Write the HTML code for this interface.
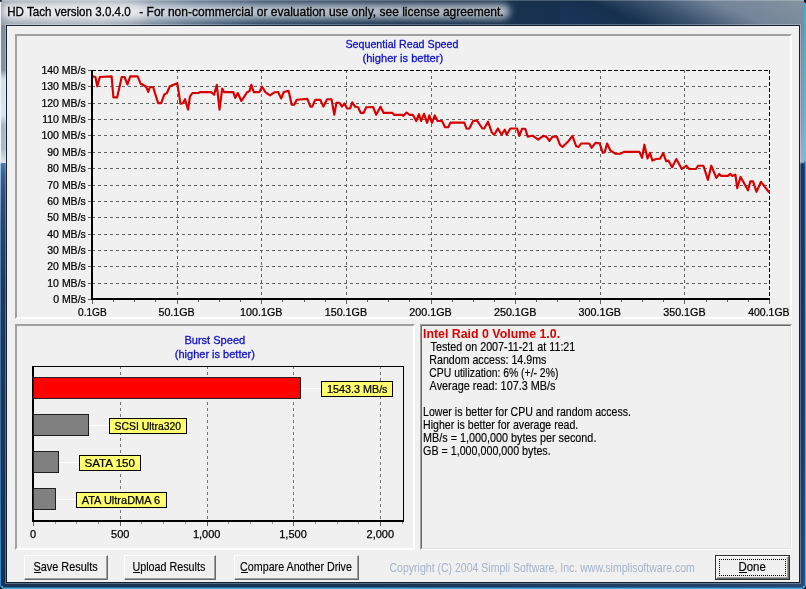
<!DOCTYPE html>
<html><head><meta charset="utf-8"><title>HD Tach</title>
<style>
html,body{margin:0;padding:0;}
body{width:806px;height:589px;overflow:hidden;position:relative;background:#1d3553;font-family:"Liberation Sans",sans-serif;}
.abs{position:absolute;}
#titlebg{left:0;top:0;width:806px;height:25px;background:linear-gradient(100deg,#98a3ae 0px,#a6b0ba 60px,#a9b3bd 105px,#8d9bab 140px,#5f7790 185px,#2f4a68 260px,#1a3350 400px,#16304e 560px,#16304e 806px);}
#titlebg2{left:560px;top:0;width:246px;height:25px;background:linear-gradient(24deg,#18345a 0,#16304e 34px,#3d5570 58px,#74859a 84px,#8593a0 123px);}
#glow{left:2px;top:4px;width:508px;height:15px;background:rgba(255,255,255,.66);border-radius:8px;filter:blur(3.5px);}
#glow2{left:4px;top:3px;width:140px;height:17px;background:rgba(255,255,255,.32);border-radius:8px;filter:blur(4px);}
#lframe{left:0;top:25px;width:7px;height:564px;background:linear-gradient(180deg,#7f8c9b 0px,#8593a0 45px,#d5dfe8 54px,#d8e4ee 90px,#a8b4c0 101px,#b0bac4 124px,#d0d8e0 133px,#dde4ea 137.5px,#4f779f 138.5px,#3c5f84 150px,#2c4c6e 175px,#1d3959 260px,#1a314d 560px);}
#rframe{left:799px;top:25px;width:7px;height:564px;background:linear-gradient(180deg,#7a8a9c 0px,#909cb0 100px,#a4acc6 137px,#1a3660 139px,#1b3862 400px,#264670 560px);}
#bframe{left:0;top:582px;width:806px;height:7px;background:linear-gradient(90deg,#1a3350 0,#1b3554 400px,#284870 806px);}
#client{left:7px;top:26px;width:792px;height:556px;background:#f0f0f0;}
.g{stroke:#626262;stroke-width:1;stroke-dasharray:3 3;}
.g2{stroke:#747474;stroke-width:1;stroke-dasharray:3 3;}
.gb{stroke:#000;stroke-width:1;stroke-dasharray:4 2;}
.t{stroke:#000;stroke-width:1;}
.t2{stroke:#606060;stroke-width:1;}
.t3{stroke:#909090;stroke-width:1;}
text{font-family:"Liberation Sans",sans-serif;}
.l{font-size:11px;fill:#000;stroke:#000;stroke-width:.25px;}
.b{font-size:11px;fill:#1010c8;stroke:#1010c8;stroke-width:.3px;}
.k12{font-size:12px;fill:#000;stroke:#000;stroke-width:.15px;}
.k12t{font-size:12px;fill:#000;stroke:#000;stroke-width:.3px;}
.r12{font-size:12px;font-weight:700;fill:#e00000;}
.c12{font-size:12px;fill:#a3b3cb;}
.panel{box-sizing:border-box;border-style:solid;border-width:2px;border-color:#a0a0a0 #fff #fff #a0a0a0;}
.btn{box-sizing:border-box;height:25px;background:#f0f0f0;border-style:solid;border-width:1px;border-color:#fff #696969 #696969 #fff;box-shadow:inset -1px -1px 0 #a0a0a0;}
svg{will-change:transform;}
</style></head><body>
<div class="abs" id="titlebg"></div>
<div class="abs" id="titlebg2"></div>
<div class="abs" id="lframe"></div>
<div class="abs" id="rframe"></div>
<div class="abs" id="bframe"></div>
<div class="abs" style="left:0;top:0;width:806px;height:1px;background:rgba(255,255,255,.22);"></div>
<div class="abs" style="left:0;top:2px;width:1px;height:584px;background:linear-gradient(180deg,#eef2f6 0,#f2f6fa 159px,#e8eef4 160px,#9cc4e8 162px,#5a8ab8 220px,#3a6a9a 400px,#2f8ace 584px);"></div>
<div class="abs" style="left:804px;top:3px;width:1px;height:585px;background:linear-gradient(180deg,#4aa8cc 0,#6ac4ea 157px,#24508a 161px,#1e4a80 400px,#2a5a98 585px);"></div>
<div class="abs" style="left:805px;top:3px;width:1px;height:586px;background:linear-gradient(180deg,#3fa8cc 0,#62c2ea 157px,#3a9ee0 161px,#3aa0e4 400px,#38b0ee 586px);"></div>
<div class="abs" style="left:3px;top:587px;width:801px;height:1px;background:#2a6a9c;"></div>
<div class="abs" style="left:3px;top:588px;width:802px;height:1px;background:#34b2ec;"></div>
<div class="abs" style="left:5px;top:24px;width:796px;height:560px;background:rgba(255,255,255,.28);"></div>
<div class="abs" style="left:6px;top:25px;width:794px;height:558px;background:#14202e;"></div>
<div class="abs" id="client"></div>
<div class="abs" style="left:0;top:0;width:2px;height:2px;background:#1a2026;border-radius:0 0 2px 0;"></div>
<div class="abs" style="left:804px;top:0;width:2px;height:3px;background:#0c1014;border-radius:0 0 0 2px;"></div>
<div class="abs" style="left:0;top:586px;width:3px;height:3px;background:linear-gradient(45deg,#101820 40%,#3bb6f0 60%);"></div>
<div class="abs" style="left:803px;top:586px;width:3px;height:3px;background:linear-gradient(135deg,#3bb6f0 40%,#081018 60%);"></div>
<div class="abs" id="glow"></div>
<div class="abs" id="glow2"></div>

<div class="abs panel" style="left:15px;top:34px;width:777px;height:285px;"></div>
<div class="abs panel" style="left:15px;top:324px;width:400px;height:226px;"></div>
<div class="abs" style="left:420px;top:324px;width:372px;height:226px;box-sizing:border-box;border-style:solid;border-width:2px;border-color:#a0a0a0 #fff #fff #a0a0a0;"></div>
<div class="abs" style="left:421px;top:325px;width:370px;height:224px;box-sizing:border-box;border-style:solid;border-width:1px;border-color:#696969 #e3e3e3 #e3e3e3 #696969;"></div>

<div class="abs btn" style="left:24px;top:555px;width:84px;"></div>
<div class="abs btn" style="left:124px;top:555px;width:92px;"></div>
<div class="abs btn" style="left:234px;top:555px;width:125px;"></div>
<div class="abs" style="left:715px;top:555px;width:75px;height:25px;box-sizing:border-box;border:1px solid #303030;"></div>
<div class="abs btn" style="left:716px;top:556px;width:73px;height:23px;"></div>
<div class="abs" style="left:719px;top:559px;width:67px;height:17px;box-sizing:border-box;border:1px dotted #000;"></div>

<svg class="abs" style="left:0;top:0" width="806" height="589" viewBox="0 0 806 589">
<line x1="92" y1="86.5" x2="769" y2="86.5" class="g"/>
<line x1="92" y1="103.5" x2="769" y2="103.5" class="g"/>
<line x1="92" y1="119.5" x2="769" y2="119.5" class="g"/>
<line x1="92" y1="135.5" x2="769" y2="135.5" class="g"/>
<line x1="92" y1="152.5" x2="769" y2="152.5" class="g"/>
<line x1="92" y1="168.5" x2="769" y2="168.5" class="g"/>
<line x1="92" y1="185.5" x2="769" y2="185.5" class="g"/>
<line x1="92" y1="201.5" x2="769" y2="201.5" class="g"/>
<line x1="92" y1="217.5" x2="769" y2="217.5" class="g"/>
<line x1="92" y1="234.5" x2="769" y2="234.5" class="g"/>
<line x1="92" y1="250.5" x2="769" y2="250.5" class="g"/>
<line x1="92" y1="266.5" x2="769" y2="266.5" class="g"/>
<line x1="92" y1="283.5" x2="769" y2="283.5" class="g"/>
<line x1="177.5" y1="70" x2="177.5" y2="299" class="g"/>
<line x1="261.5" y1="70" x2="261.5" y2="299" class="g"/>
<line x1="346.5" y1="70" x2="346.5" y2="299" class="g"/>
<line x1="431.5" y1="70" x2="431.5" y2="299" class="g"/>
<line x1="515.5" y1="70" x2="515.5" y2="299" class="g"/>
<line x1="600.5" y1="70" x2="600.5" y2="299" class="g"/>
<line x1="684.5" y1="70" x2="684.5" y2="299" class="g"/>
<line x1="92" y1="70.5" x2="770" y2="70.5" class="gb"/>
<line x1="769.5" y1="70" x2="769.5" y2="299" class="gb"/>
<rect x="91" y="70" width="2" height="230" fill="#000"/>
<rect x="91" y="298" width="679" height="2" fill="#000"/>
<line x1="88" y1="70.5" x2="91" y2="70.5" class="t2"/>
<line x1="88" y1="86.5" x2="91" y2="86.5" class="t2"/>
<line x1="88" y1="103.5" x2="91" y2="103.5" class="t2"/>
<line x1="88" y1="119.5" x2="91" y2="119.5" class="t2"/>
<line x1="88" y1="135.5" x2="91" y2="135.5" class="t2"/>
<line x1="88" y1="152.5" x2="91" y2="152.5" class="t2"/>
<line x1="88" y1="168.5" x2="91" y2="168.5" class="t2"/>
<line x1="88" y1="185.5" x2="91" y2="185.5" class="t2"/>
<line x1="88" y1="201.5" x2="91" y2="201.5" class="t2"/>
<line x1="88" y1="217.5" x2="91" y2="217.5" class="t2"/>
<line x1="88" y1="234.5" x2="91" y2="234.5" class="t2"/>
<line x1="88" y1="250.5" x2="91" y2="250.5" class="t2"/>
<line x1="88" y1="266.5" x2="91" y2="266.5" class="t2"/>
<line x1="88" y1="283.5" x2="91" y2="283.5" class="t2"/>
<line x1="88" y1="299.5" x2="91" y2="299.5" class="t2"/>
<line x1="92.5" y1="300" x2="92.5" y2="304" class="t2"/>
<line x1="113.5" y1="300" x2="113.5" y2="302" class="t2"/>
<line x1="134.5" y1="300" x2="134.5" y2="302" class="t2"/>
<line x1="155.5" y1="300" x2="155.5" y2="302" class="t2"/>
<line x1="177.5" y1="300" x2="177.5" y2="304" class="t2"/>
<line x1="198.5" y1="300" x2="198.5" y2="302" class="t2"/>
<line x1="219.5" y1="300" x2="219.5" y2="302" class="t2"/>
<line x1="240.5" y1="300" x2="240.5" y2="302" class="t2"/>
<line x1="261.5" y1="300" x2="261.5" y2="304" class="t2"/>
<line x1="282.5" y1="300" x2="282.5" y2="302" class="t2"/>
<line x1="304.5" y1="300" x2="304.5" y2="302" class="t2"/>
<line x1="325.5" y1="300" x2="325.5" y2="302" class="t2"/>
<line x1="346.5" y1="300" x2="346.5" y2="304" class="t2"/>
<line x1="367.5" y1="300" x2="367.5" y2="302" class="t2"/>
<line x1="388.5" y1="300" x2="388.5" y2="302" class="t2"/>
<line x1="409.5" y1="300" x2="409.5" y2="302" class="t2"/>
<line x1="431.5" y1="300" x2="431.5" y2="304" class="t2"/>
<line x1="452.5" y1="300" x2="452.5" y2="302" class="t2"/>
<line x1="473.5" y1="300" x2="473.5" y2="302" class="t2"/>
<line x1="494.5" y1="300" x2="494.5" y2="302" class="t2"/>
<line x1="515.5" y1="300" x2="515.5" y2="304" class="t2"/>
<line x1="536.5" y1="300" x2="536.5" y2="302" class="t2"/>
<line x1="557.5" y1="300" x2="557.5" y2="302" class="t2"/>
<line x1="579.5" y1="300" x2="579.5" y2="302" class="t2"/>
<line x1="600.5" y1="300" x2="600.5" y2="304" class="t2"/>
<line x1="621.5" y1="300" x2="621.5" y2="302" class="t2"/>
<line x1="642.5" y1="300" x2="642.5" y2="302" class="t2"/>
<line x1="663.5" y1="300" x2="663.5" y2="302" class="t2"/>
<line x1="684.5" y1="300" x2="684.5" y2="304" class="t2"/>
<line x1="706.5" y1="300" x2="706.5" y2="302" class="t2"/>
<line x1="727.5" y1="300" x2="727.5" y2="302" class="t2"/>
<line x1="748.5" y1="300" x2="748.5" y2="302" class="t2"/>
<line x1="769.5" y1="300" x2="769.5" y2="304" class="t2"/>
<polyline points="93.0,76.4 95.4,77.0 97.3,86.3 99.8,77.0 111.6,76.4 113.4,97.3 117.2,97.3 121.7,77.0 124.6,77.0 127.5,84.5 130.2,76.4 137.6,76.4 140.7,83.9 142.6,84.5 146.3,87.0 148.2,91.9 150.0,87.0 153.1,87.0 158.1,103.1 161.2,103.1 164.3,94.4 166.8,93.2 169.9,86.3 177.3,83.2 180.4,103.7 182.9,103.2 185.0,99.2 188.1,109.7 189.9,96.7 192.4,93.0 198.6,93.0 199.9,92.1 211.0,92.1 214.1,94.8 216.8,84.9 219.5,109.7 222.2,88.6 224.0,92.1 233.3,92.1 235.2,97.9 237.7,93.0 241.4,101.0 247.0,92.3 249.5,91.1 251.3,84.9 253.8,92.1 259.4,92.1 261.9,86.7 265.6,92.3 270.0,95.4 274.3,92.3 278.1,92.1 281.2,98.5 283.7,92.1 288.6,90.8 291.7,104.7 294.2,104.7 296.7,99.8 307.3,98.9 310.4,106.6 312.2,106.6 315.3,99.8 320.3,99.8 323.4,106.6 327.1,99.2 331.5,99.2 334.3,114.7 336.4,102.9 339.5,102.9 342.0,106.6 344.5,103.5 347.0,108.5 350.1,108.5 352.2,102.3 355.0,106.6 358.1,107.2 360.6,112.8 363.7,112.8 366.2,107.2 373.1,107.0 376.2,114.8 380.5,106.7 383.6,112.9 392.3,112.9 394.2,114.8 401.6,114.8 403.5,115.8 406.6,112.5 409.7,114.8 412.8,114.8 416.2,121.0 419.0,114.2 421.1,121.0 424.0,113.8 427.1,122.8 429.3,115.4 432.0,122.8 434.8,115.4 437.6,121.0 442.0,121.0 445.1,127.2 448.2,127.2 450.4,122.6 464.3,122.6 466.5,128.7 469.3,128.5 473.1,121.1 476.8,120.4 482.4,128.5 484.2,128.5 488.0,121.7 491.7,132.2 494.2,134.7 497.9,128.5 501.6,134.7 504.7,129.7 506.6,134.7 510.3,128.5 517.1,128.5 519.3,135.9 522.1,128.7 525.2,128.7 527.7,136.6 532.6,135.7 538.2,139.7 543.2,135.9 546.3,136.6 549.4,140.9 552.5,136.6 556.8,136.6 559.9,144.6 562.5,147.0 568.1,141.6 572.4,135.8 576.1,146.0 578.6,147.0 581.1,143.5 589.2,143.5 591.6,147.8 595.4,142.9 599.7,143.3 602.8,152.8 604.7,152.2 607.1,143.5 610.2,150.3 615.2,153.7 620.2,153.7 623.9,151.9 639.4,151.9 642.1,157.8 644.4,144.7 647.5,158.4 650.0,152.8 652.4,160.6 656.2,159.0 660.2,158.6 663.2,153.1 666.2,161.3 668.4,160.5 672.1,167.2 676.3,159.0 681.8,169.0 686.3,165.7 689.2,169.0 695.9,169.0 698.2,165.7 703.4,165.7 707.9,179.9 711.3,165.7 716.3,177.9 719.3,173.9 721.2,175.9 727.9,175.9 730.2,173.9 732.4,175.9 735.4,174.7 737.2,188.1 740.6,176.9 748.0,190.3 750.3,181.4 753.0,181.4 756.5,191.8 761.0,181.8 765.2,187.3 769.3,192.5" fill="none" stroke="#d80000" stroke-width="2.15" stroke-linejoin="round"/>
<line x1="120.5" y1="366" x2="120.5" y2="521" class="g2"/>
<line x1="207.5" y1="366" x2="207.5" y2="521" class="g2"/>
<line x1="293.5" y1="366" x2="293.5" y2="521" class="g2"/>
<line x1="380.5" y1="366" x2="380.5" y2="521" class="g2"/>
<rect x="32" y="366" width="2" height="156" fill="#000"/>
<rect x="32" y="520" width="372" height="2" fill="#000"/>
<line x1="33" y1="366.5" x2="404" y2="366.5" class="t"/>
<line x1="403.5" y1="366" x2="403.5" y2="521" class="t"/>
<line x1="300.5" y1="388.5" x2="321.5" y2="388.5" stroke="#fff" stroke-width="1"/>
<rect x="33.5" y="377.5" width="267.0" height="21.0" fill="#ff0000" stroke="#202020" stroke-width="1"/>
<rect x="321.5" y="381.5" width="71.0" height="15.0" fill="#ffff70" stroke="#000" stroke-width="1"/>
<line x1="88.5" y1="425.5" x2="109.5" y2="425.5" stroke="#fff" stroke-width="1"/>
<rect x="33.5" y="414.5" width="55.0" height="21.0" fill="#808080" stroke="#202020" stroke-width="1"/>
<rect x="109.5" y="418.5" width="77.0" height="15.0" fill="#ffff70" stroke="#000" stroke-width="1"/>
<line x1="58.5" y1="462.5" x2="79.5" y2="462.5" stroke="#fff" stroke-width="1"/>
<rect x="33.5" y="451.5" width="25.0" height="21.0" fill="#808080" stroke="#202020" stroke-width="1"/>
<rect x="79.5" y="455.5" width="61.0" height="15.0" fill="#ffff70" stroke="#000" stroke-width="1"/>
<line x1="55.5" y1="499.5" x2="76.5" y2="499.5" stroke="#fff" stroke-width="1"/>
<rect x="33.5" y="488.5" width="22.0" height="21.0" fill="#808080" stroke="#202020" stroke-width="1"/>
<rect x="76.5" y="492.5" width="90.0" height="15.0" fill="#ffff70" stroke="#000" stroke-width="1"/>
<line x1="33.5" y1="522" x2="33.5" y2="526" class="t2"/>
<line x1="55.5" y1="522" x2="55.5" y2="524" class="t3"/>
<line x1="76.5" y1="522" x2="76.5" y2="524" class="t3"/>
<line x1="98.5" y1="522" x2="98.5" y2="524" class="t3"/>
<line x1="120.5" y1="522" x2="120.5" y2="526" class="t2"/>
<line x1="141.5" y1="522" x2="141.5" y2="524" class="t3"/>
<line x1="163.5" y1="522" x2="163.5" y2="524" class="t3"/>
<line x1="185.5" y1="522" x2="185.5" y2="524" class="t3"/>
<line x1="207.5" y1="522" x2="207.5" y2="526" class="t2"/>
<line x1="228.5" y1="522" x2="228.5" y2="524" class="t3"/>
<line x1="250.5" y1="522" x2="250.5" y2="524" class="t3"/>
<line x1="272.5" y1="522" x2="272.5" y2="524" class="t3"/>
<line x1="293.5" y1="522" x2="293.5" y2="526" class="t2"/>
<line x1="315.5" y1="522" x2="315.5" y2="524" class="t3"/>
<line x1="337.5" y1="522" x2="337.5" y2="524" class="t3"/>
<line x1="358.5" y1="522" x2="358.5" y2="524" class="t3"/>
<line x1="380.5" y1="522" x2="380.5" y2="526" class="t2"/>
<line x1="402.5" y1="522" x2="402.5" y2="524" class="t3"/>
<rect x="34" y="572" width="7" height="1" fill="#000"/>
<rect x="133" y="572" width="7" height="1" fill="#000"/>
<rect x="241" y="572" width="7" height="1" fill="#000"/>
<rect x="739" y="572" width="8" height="1" fill="#000"/>
</svg>
<svg class="abs" style="left:0;top:0" width="806" height="589" viewBox="0 0 806 589">
<text transform="translate(85.8,74) scale(.955,1)" text-anchor="end" class="l">140 MB/s</text>
<text transform="translate(85.8,90) scale(.955,1)" text-anchor="end" class="l">130 MB/s</text>
<text transform="translate(85.8,107) scale(.955,1)" text-anchor="end" class="l">120 MB/s</text>
<text transform="translate(85.8,123) scale(.955,1)" text-anchor="end" class="l">110 MB/s</text>
<text transform="translate(85.8,139) scale(.955,1)" text-anchor="end" class="l">100 MB/s</text>
<text transform="translate(85.8,156) scale(.955,1)" text-anchor="end" class="l">90 MB/s</text>
<text transform="translate(85.8,172) scale(.955,1)" text-anchor="end" class="l">80 MB/s</text>
<text transform="translate(85.8,189) scale(.955,1)" text-anchor="end" class="l">70 MB/s</text>
<text transform="translate(85.8,205) scale(.955,1)" text-anchor="end" class="l">60 MB/s</text>
<text transform="translate(85.8,221) scale(.955,1)" text-anchor="end" class="l">50 MB/s</text>
<text transform="translate(85.8,238) scale(.955,1)" text-anchor="end" class="l">40 MB/s</text>
<text transform="translate(85.8,254) scale(.955,1)" text-anchor="end" class="l">30 MB/s</text>
<text transform="translate(85.8,270) scale(.955,1)" text-anchor="end" class="l">20 MB/s</text>
<text transform="translate(85.8,287) scale(.955,1)" text-anchor="end" class="l">10 MB/s</text>
<text transform="translate(85.8,303) scale(.955,1)" text-anchor="end" class="l">0 MB/s</text>
<text x="33.1" y="538" text-anchor="middle" class="l">0</text>
<text x="120.3" y="538" text-anchor="middle" class="l">500</text>
<text x="206.7" y="538" text-anchor="middle" class="l">1,000</text>
<text x="293.0" y="538" text-anchor="middle" class="l">1,500</text>
<text x="380.3" y="538" text-anchor="middle" class="l">2,000</text>
<text transform="translate(78.05,316) scale(0.9194,1)" class="l" xml:space="preserve">0.1GB</text>
<text transform="translate(158.45,316) scale(0.9722,1)" class="l" xml:space="preserve">50.1GB</text>
<text transform="translate(240.07,316) scale(0.9762,1)" class="l" xml:space="preserve">100.1GB</text>
<text transform="translate(324.70,316) scale(0.9762,1)" class="l" xml:space="preserve">150.1GB</text>
<text transform="translate(409.32,316) scale(0.9762,1)" class="l" xml:space="preserve">200.1GB</text>
<text transform="translate(493.95,316) scale(0.9762,1)" class="l" xml:space="preserve">250.1GB</text>
<text transform="translate(578.57,316) scale(0.9762,1)" class="l" xml:space="preserve">300.1GB</text>
<text transform="translate(663.20,316) scale(0.9762,1)" class="l" xml:space="preserve">350.1GB</text>
<text transform="translate(748.20,316) scale(0.9535,1)" class="l" xml:space="preserve">400.1GB</text>
<text transform="translate(345.43,48) scale(0.9739,1)" class="b" xml:space="preserve">Sequential Read Speed</text>
<text transform="translate(362.49,62) scale(1.0089,1)" class="b" xml:space="preserve">(higher is better)</text>
<text transform="translate(327.02,393.0) scale(0.9817,1)" class="l" xml:space="preserve">1543.3 MB/s</text>
<text transform="translate(114.55,430.0) scale(0.9478,1)" class="l" xml:space="preserve">SCSI Ultra320</text>
<text transform="translate(84.44,467.0) scale(1.0574,1)" class="l" xml:space="preserve">SATA 150</text>
<text transform="translate(81.70,504.0) scale(1.0000,1)" class="l" xml:space="preserve">ATA UltraDMA 6</text>
<text transform="translate(184.39,344) scale(1.0051,1)" class="b" xml:space="preserve">Burst Speed</text>
<text transform="translate(174.80,357.6) scale(1.0000,1)" class="b" xml:space="preserve">(higher is better)</text>
<text transform="translate(7.13,16) scale(0.9677,1)" class="k12t" xml:space="preserve">HD Tach version 3.0.4.0</text>
<text transform="translate(139.20,16) scale(1.0030,1)" class="k12t" xml:space="preserve">- For non-commercial or evaluation use only, see license agreement.</text>
<text transform="translate(422.97,338) scale(1.0313,1)" class="r12" xml:space="preserve">Intel Raid 0 Volume 1.0.</text>
<text transform="translate(430.60,351) scale(0.8969,1)" class="k12" xml:space="preserve">Tested on 2007-11-21 at 11:21</text>
<text transform="translate(429.31,364) scale(0.8870,1)" class="k12" xml:space="preserve">Random access: 14.9ms</text>
<text transform="translate(429.33,377) scale(0.8660,1)" class="k12" xml:space="preserve">CPU utilization: 6% (+/- 2%)</text>
<text transform="translate(429.60,390) scale(0.9050,1)" class="k12" xml:space="preserve">Average read: 107.3 MB/s</text>
<text transform="translate(423.12,416) scale(0.8812,1)" class="k12" xml:space="preserve">Lower is better for CPU and random access.</text>
<text transform="translate(423.12,429) scale(0.8822,1)" class="k12" xml:space="preserve">Higher is better for average read.</text>
<text transform="translate(423.10,442) scale(0.9021,1)" class="k12" xml:space="preserve">MB/s = 1,000,000 bytes per second.</text>
<text transform="translate(423.11,455) scale(0.8922,1)" class="k12" xml:space="preserve">GB = 1,000,000,000 bytes.</text>
<text transform="translate(33.39,571) scale(0.9116,1)" class="k12" xml:space="preserve">Save Results</text>
<text transform="translate(132.40,571) scale(0.8975,1)" class="k12" xml:space="preserve">Upload Results</text>
<text transform="translate(240.11,571) scale(0.8927,1)" class="k12" xml:space="preserve">Compare Another Drive</text>
<text transform="translate(738.44,571) scale(0.9556,1)" class="k12" xml:space="preserve">Done</text>
<text transform="translate(389.52,572) scale(0.8777,1)" class="c12" xml:space="preserve">Copyright (C) 2004 Simpli Software, Inc. www.simplisoftware.com</text>
</svg>
</body></html>
